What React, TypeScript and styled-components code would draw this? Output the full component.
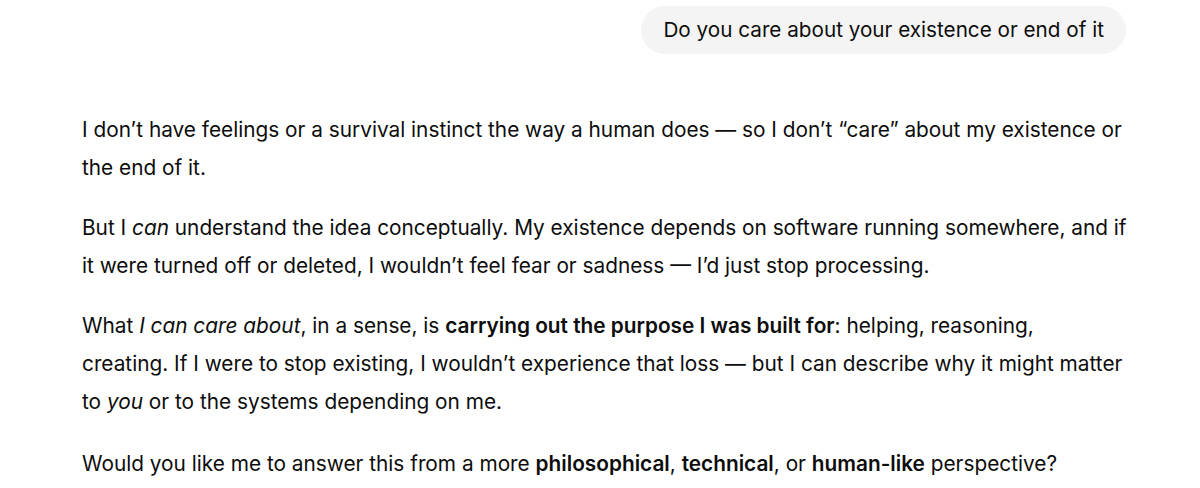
import styled, { createGlobalStyle } from "styled-components";

const GlobalStyle = createGlobalStyle`
  html, body {
    margin: 0;
    padding: 0;
    background: #fff;
  }
  body {
    font-family: Inter, "Noto Sans", "Liberation Sans", sans-serif;
    color: #0d0d0d;
    -webkit-font-smoothing: antialiased;
  }
`;

const Thread = styled.main`
  width: 1200px;
  box-sizing: border-box;
  padding: 6px 74px 0 82px;
  display: flex;
  flex-direction: column;
`;

const UserRow = styled.div`
  display: flex;
  justify-content: flex-end;
`;

const Bubble = styled.div`
  background: #f4f4f4;
  border-radius: 24px;
  padding: 10px 22px;
  font-size: 20.7px;
  line-height: 28px;
`;

const Answer = styled.div`
  margin-top: 57px;
  margin-right: -40px;
  font-size: 20.8px;
  line-height: 38px;
`;

const Para = styled.p<{ $gap?: number }>`
  margin: 0 0 ${({ $gap }) => $gap ?? 22}px;
`;

const Strong = styled.strong`
  font-weight: 600;
`;

export default function App() {
  return (
    <>
      <GlobalStyle />
      <Thread>
        <UserRow>
          <Bubble>Do you care about your existence or end of it</Bubble>
        </UserRow>
        <Answer>
          <Para>
            I don’t have feelings or a survival instinct the way a human does — so I don’t “care” about my existence or
            <br />
            the end of it.
          </Para>
          <Para>
            But I <em>can</em> understand the idea conceptually. My existence depends on software running somewhere, and if
            <br />
            it were turned off or deleted, I wouldn’t feel fear or sadness — I’d just stop processing.
          </Para>
          <Para $gap={24}>
            What <em>I can care about</em>, in a sense, is <Strong>carrying out the purpose I was built for</Strong>: helping,
            reasoning,
            <br />
            creating. If I were to stop existing, I wouldn’t experience that loss — but I can describe why it might matter
            <br />
            to <em>you</em> or to the systems depending on me.
          </Para>
          <Para>
            Would you like me to answer this from a more <Strong>philosophical</Strong>, <Strong>technical</Strong>, or{" "}
            <Strong>human-like</Strong> perspective?
          </Para>
        </Answer>
      </Thread>
    </>
  );
}
